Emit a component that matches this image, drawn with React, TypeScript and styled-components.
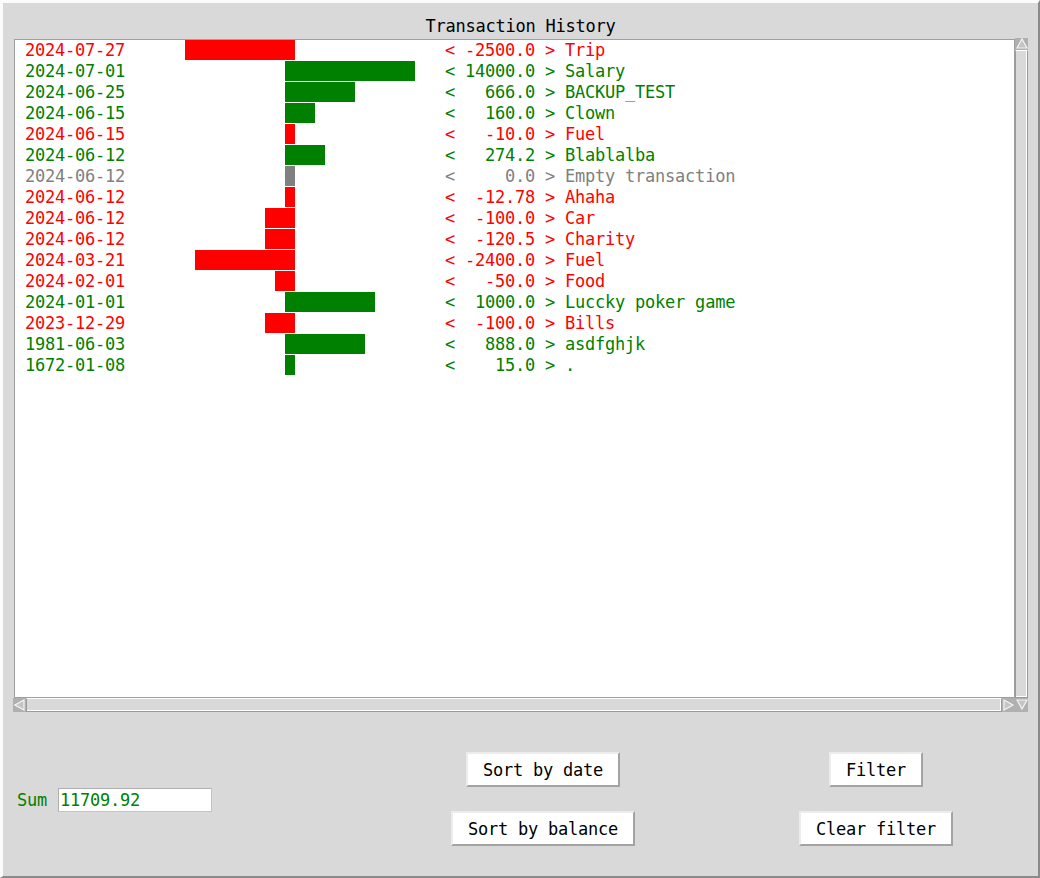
import React from 'react';
import styled, { createGlobalStyle } from 'styled-components';

const GlobalStyle = createGlobalStyle`
  html, body {
    margin: 0;
    padding: 0;
    background: #d9d9d9;
  }
`;

const mono = `"DejaVu Sans Mono", "Liberation Mono", monospace`;

type Kind = 'pos' | 'neg' | 'zero';

interface Transaction {
  date: string;
  amount: string;
  name: string;
  kind: Kind;
  bar: number;
}

const transactions: Array<Transaction> = [
  { date: '2024-07-27', amount: '-2500.0', name: 'Trip', kind: 'neg', bar: 110 },
  { date: '2024-07-01', amount: '14000.0', name: 'Salary', kind: 'pos', bar: 130 },
  { date: '2024-06-25', amount: '666.0', name: 'BACKUP_TEST', kind: 'pos', bar: 70 },
  { date: '2024-06-15', amount: '160.0', name: 'Clown', kind: 'pos', bar: 30 },
  { date: '2024-06-15', amount: '-10.0', name: 'Fuel', kind: 'neg', bar: 10 },
  { date: '2024-06-12', amount: '274.2', name: 'Blablalba', kind: 'pos', bar: 40 },
  { date: '2024-06-12', amount: '0.0', name: 'Empty transaction', kind: 'zero', bar: 10 },
  { date: '2024-06-12', amount: '-12.78', name: 'Ahaha', kind: 'neg', bar: 10 },
  { date: '2024-06-12', amount: '-100.0', name: 'Car', kind: 'neg', bar: 30 },
  { date: '2024-06-12', amount: '-120.5', name: 'Charity', kind: 'neg', bar: 30 },
  { date: '2024-03-21', amount: '-2400.0', name: 'Fuel', kind: 'neg', bar: 100 },
  { date: '2024-02-01', amount: '-50.0', name: 'Food', kind: 'neg', bar: 20 },
  { date: '2024-01-01', amount: '1000.0', name: 'Luccky poker game', kind: 'pos', bar: 90 },
  { date: '2023-12-29', amount: '-100.0', name: 'Bills', kind: 'neg', bar: 30 },
  { date: '1981-06-03', amount: '888.0', name: 'asdfghjk', kind: 'pos', bar: 80 },
  { date: '1672-01-08', amount: '15.0', name: '.', kind: 'pos', bar: 10 },
];

const kindColor = (kind: Kind) => (kind === 'pos' ? '#008000' : kind === 'neg' ? '#ff0000' : '#808080');

const Window = styled.div`
  width: 1040px;
  height: 878px;
  box-sizing: border-box;
  border-style: solid;
  border-width: 3px 2px 2px 3px;
  border-color: #fcfcfc #8a8a8a #8a8a8a #fcfcfc;
  background: #d9d9d9;
  display: flex;
  flex-direction: column;
  font-family: ${mono};
  font-size: 17px;
  letter-spacing: -0.23px;
`;

const Title = styled.div`
  text-align: center;
  color: #000;
  line-height: 20px;
  padding: 13px 0 2px;
`;

const ScrollArea = styled.div`
  margin-left: 10px;
  width: 1015px;
  height: 676px;
  display: grid;
  grid-template-columns: 1fr 13px;
  grid-template-rows: 1fr 14px;
`;

const Canvas = styled.div`
  grid-column: 1;
  grid-row: 1;
  margin: 1px 0 0 1px;
  border: 1px solid #a0a0a0;
  background: #fff;
  overflow: hidden;
`;

const Row = styled.div`
  display: flex;
  align-items: flex-start;
  height: 21px;
  padding-left: 10px;
  white-space: pre;
`;

const RowText = styled.span<{ $kind: Kind }>`
  color: ${p => kindColor(p.$kind)};
  line-height: 21px;
`;

const DateText = styled(RowText)`
  width: 100px;
  flex: none;
`;

const BarTrack = styled.div`
  width: 320px;
  height: 21px;
  flex: none;
`;

const Bar = styled.div<{ $kind: Kind }>`
  height: 20px;
  background: ${p => kindColor(p.$kind)};
`;

const VScroll = styled.div`
  grid-column: 2;
  grid-row: 1 / 3;
  display: flex;
  flex-direction: column;
`;

const HScroll = styled.div`
  grid-column: 1;
  grid-row: 2;
  display: flex;
`;

const ArrowBox = styled.div<{ $w: number; $h: number }>`
  width: ${p => p.$w}px;
  height: ${p => p.$h}px;
  flex: none;
  background: #b0b0b0;
  display: flex;
  align-items: center;
  justify-content: center;
  svg { display: block; }
`;

const Trough = styled.div`
  flex: 1;
  box-sizing: border-box;
  background: #d9d9d9;
  border-style: solid;
  border-width: 1px;
  border-color: #ffffff #9a9a9a #9a9a9a #9a9a9a;
  box-shadow: inset -1px -1px 0 #ffffff;
`;

const BottomPanel = styled.div`
  flex: 1;
  display: grid;
  grid-template-columns: 397px 286px 55px 270px;
  align-items: center;
  padding: 40px 0 30px;
`;

const SumBox = styled.div`
  display: flex;
  align-items: center;
  padding: 1px 0 0 14px;
`;

const SumLabel = styled.span`
  color: #008000;
  margin-right: 11px;
`;

const SumEntry = styled.div`
  width: 154px;
  height: 24px;
  box-sizing: border-box;
  background: #fff;
  border: 1px solid #c4c4c4;
  border-top-color: #b0b0b0;
  border-left-color: #b0b0b0;
  color: #008000;
  line-height: 22px;
  padding-left: 1px;
`;

const ButtonColumn = styled.div<{ $col: number }>`
  grid-column: ${p => p.$col};
  display: flex;
  flex-direction: column;
  align-items: center;
  gap: 24px;
`;

const Button = styled.button`
  height: 35px;
  box-sizing: border-box;
  padding: 0 15px;
  background: #fff;
  border-style: solid;
  border-width: 2px;
  border-color: #ececec #a3a3a3 #a3a3a3 #ececec;
  font-family: ${mono};
  font-size: 17px;
  letter-spacing: -0.23px;
  color: #000;
  white-space: pre;
`;

const Arrow = ({ dir }: { dir: 'up' | 'down' | 'left' | 'right' }) => {
  const pts = {
    up: '1,10 6,1 11,10',
    down: '1,1 6,10 11,1',
    left: '10,1 1,6 10,11',
    right: '1,1 10,6 1,11',
  }[dir];
  return (
    <svg width="12" height="12" viewBox="0 0 12 12">
      <polygon points={pts} fill="#c4c4c4" stroke="#f4f4f4" strokeWidth="1.2" />
    </svg>
  );
};

const App = () => {
  return (
    <>
      <GlobalStyle />
      <Window>
        <Title>Transaction History</Title>
        <ScrollArea>
          <Canvas>
            {transactions.map((t, i) => {
              const offset = t.kind === 'neg' ? 170 - t.bar : 160;
              return (
                <Row key={i}>
                  <DateText $kind={t.kind}>{t.date}</DateText>
                  <BarTrack>
                    <Bar $kind={t.kind} style={{ marginLeft: offset, width: t.bar }} />
                  </BarTrack>
                  <RowText $kind={t.kind}>{`< ${t.amount.padStart(7, ' ')} > ${t.name}`}</RowText>
                </Row>
              );
            })}
          </Canvas>
          <VScroll>
            <ArrowBox $w={13} $h={12}><Arrow dir="up" /></ArrowBox>
            <Trough />
            <ArrowBox $w={13} $h={14}><Arrow dir="down" /></ArrowBox>
          </VScroll>
          <HScroll>
            <ArrowBox $w={13} $h={14}><Arrow dir="left" /></ArrowBox>
            <Trough />
            <ArrowBox $w={13} $h={14}><Arrow dir="right" /></ArrowBox>
          </HScroll>
        </ScrollArea>
        <BottomPanel>
          <SumBox>
            <SumLabel>Sum</SumLabel>
            <SumEntry>11709.92</SumEntry>
          </SumBox>
          <ButtonColumn $col={2}>
            <Button>Sort by date</Button>
            <Button>Sort by balance</Button>
          </ButtonColumn>
          <ButtonColumn $col={4}>
            <Button>Filter</Button>
            <Button>Clear filter</Button>
          </ButtonColumn>
        </BottomPanel>
      </Window>
    </>
  );
};

export default App;
